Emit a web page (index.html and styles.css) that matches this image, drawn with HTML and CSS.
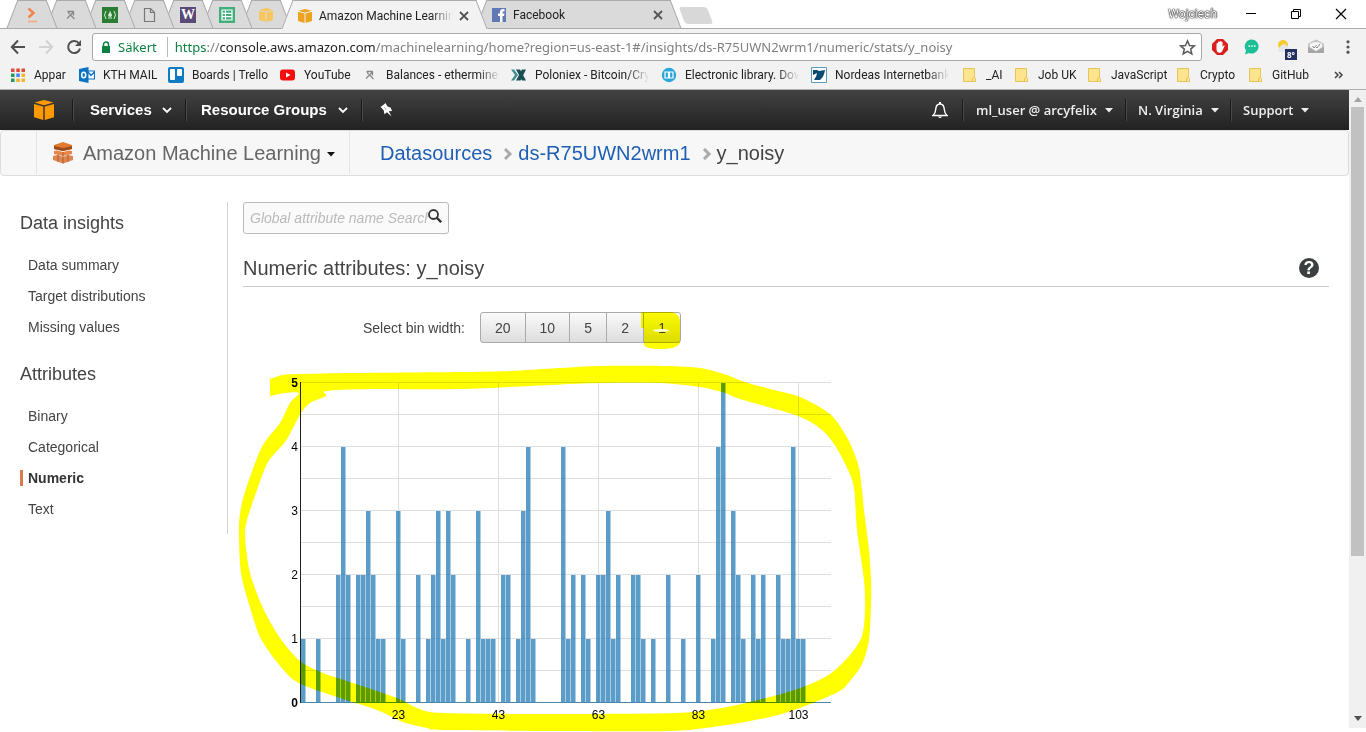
FILE: index.html
```html
<!DOCTYPE html>
<html lang="en">
<head>
<meta charset="utf-8">
<title>Amazon Machine Learning</title>
<link rel="stylesheet" href="styles.css">
</head>
<body>
<svg class="defs" aria-hidden="true">
  <symbol id="cube" viewBox="0 0 20 20">
    <path d="M10 0l9.500 2.500-9.500 2.800L.5 2.500z"/>
    <path d="M0 4l9.300 2.600V20L0 17.200zM20 4l-9.300 2.600V20L20 17.200z"/>
  </symbol>
  <symbol id="folder" viewBox="0 0 16 16">
    <path d="M1.500 1.500h11v9l1 1v3h-12z" fill="#fee48c" stroke="#e6c45c"/>
    <path d="M10.500 14v-2.500l2-1" fill="none" stroke="#e6c45c"/>
  </symbol>
  <symbol id="pick" viewBox="0 0 16 16">
    <path d="M4.500 4.500h6.500M10.500 5L4 11.500M5 4.500l1.500 3M10.500 5v3.500M8 8.500l3.500 3.500" fill="none" stroke="#888" stroke-width="1.300"/>
  </symbol>
  <symbol id="cross" viewBox="0 0 10 10"><path d="M1 1l8 8M9 1L1 9" fill="none" stroke="#555" stroke-width="1.800"/></symbol>
  <symbol id="caret" viewBox="0 0 8 5"><path d="M0 0h8L4 4.500z" fill="currentColor"/></symbol>
  <symbol id="down" viewBox="0 0 10 7"><path d="M1 1l4 4 4-4" fill="none" stroke="currentColor" stroke-width="1.800"/></symbol>
  <symbol id="crumb" viewBox="0 0 10 12"><path d="M2 1l5 5-5 5" fill="none" stroke="#aaa" stroke-width="3"/></symbol>
</svg>

<header class="browser">
  <div class="tabstrip">
    <div class="tab t1"><svg class="ico" viewBox="0 0 16 16"><path d="M4.500 1.500l5 4.500-5 4.500" fill="none" stroke="#f4854a" stroke-width="2.500"/><path d="M4 14.500h9" stroke="#f9a67c" stroke-width="1.500"/></svg></div>
    <div class="tab t2"><svg class="ico"><use href="#pick"/></svg></div>
    <div class="tab t3"><svg class="ico" viewBox="0 0 16 16"><path d="M0 0h16v16H0z" fill="#2b7d33"/><path d="M4 4q-3 4 0 8M12 4q3 4 0 8M6 11h4" fill="none" stroke="#d5ead6"/><path d="M8 3.500q-.2 2-2 4.500 0 2 2 2t2-2q-.3-1-1-2z" fill="#d5ead6"/></svg></div>
    <div class="tab t4"><svg class="ico" viewBox="0 0 16 16"><path d="M3.500 1.500h6l4 4v9h-10zM9.500 1.500v4h4" fill="none" stroke="#777" stroke-width="1.200"/></svg></div>
    <div class="tab t5"><span class="ico w-logo">W</span></div>
    <div class="tab t6"><svg class="ico" viewBox="0 0 16 16"><path d="M0 0h16v16H0z" fill="#3fae7b"/><path d="M3 3h10v10H3zM3 6.300h10M3 9.600h10M6.500 3v10" fill="none" stroke="#fff" stroke-width="1.200"/></svg></div>
    <div class="tab t7"><svg class="ico amber pale"><use href="#cube"/></svg></div>
    <div class="tab active"><svg class="ico amber"><use href="#cube"/></svg><span class="tab-title">Amazon Machine Learning</span><button class="tab-close" aria-label="Close tab"><svg><use href="#cross"/></svg></button></div>
    <div class="tab wide"><svg class="ico" viewBox="0 0 16 16"><path d="M1 1h14v14H1z" fill="#6079b5"/><path d="M9 15V9H7V6.500h2V5q0-3 3-3h1.500v2.500h-1q-1 0-1 1v1h2L13 9h-1.500v6z" fill="#fff"/></svg><span class="tab-title">Facebook</span><button class="tab-close" aria-label="Close tab"><svg><use href="#cross"/></svg></button></div>
    <button class="new-tab" aria-label="New tab"></button>
    <div class="window-controls">
      <span class="profile">Wojciech</span>
      <button aria-label="Minimize"><svg viewBox="0 0 12 12"><path d="M1 5.500h10" stroke="#000"/></svg></button>
      <button aria-label="Restore"><svg viewBox="0 0 12 12"><path d="M1.500 3.500h7v7h-7zM3.500 3V1.500h7v7H9" fill="none" stroke="#000"/></svg></button>
      <button aria-label="Close"><svg viewBox="0 0 12 12"><path d="M1 1l10 10M11 1L1 11" stroke="#000" stroke-width="1.200"/></svg></button>
    </div>
  </div>

  <div class="toolbar">
    <div class="nav-buttons">
      <button aria-label="Back"><svg viewBox="0 0 16 16"><path d="M15 8H2M8 1.500L1.800 8 8 14.500" fill="none" stroke="#505050" stroke-width="2"/></svg></button>
      <button aria-label="Forward"><svg viewBox="0 0 16 16"><path d="M1 8h13M8 1.500L14.200 8 8 14.500" fill="none" stroke="#d2d2d2" stroke-width="2"/></svg></button>
      <button aria-label="Reload"><svg viewBox="0 0 16 16"><path d="M13 4.500A6 6 0 1 0 14 9.500" fill="none" stroke="#505050" stroke-width="2"/><path d="M15 1v6H9z" fill="#505050"/></svg></button>
    </div>
    <div class="omnibox">
      <svg class="lock" viewBox="0 0 10 12"><path d="M1 5h8v7H1z" fill="#0b8043"/><path d="M2.500 5.500V3.500a2.500 2.500 0 0 1 5 0v2" fill="none" stroke="#0b8043" stroke-width="1.500"/></svg>
      <span class="secure">Säkert</span>
      <span class="url"><span class="scheme">https</span>://<span class="host">console.aws.amazon.com</span>/machinelearning/home?region=us-east-1#/insights/ds-R75UWN2wrm1/numeric/stats/y_noisy</span>
      <svg class="star" viewBox="0 0 16 16"><path d="M8 1.800l1.900 4.300 4.600.4-3.500 3 1.100 4.600L8 11.700l-4.100 2.400L5 9.500l-3.500-3 4.600-.4z" fill="none" stroke="#5a5a5a" stroke-width="1.400"/></svg>
    </div>
    <div class="extensions">
      <svg viewBox="0 0 16 16"><path d="M5 0h6l5 5v6l-5 5H5l-5-5V5z" fill="#d8201f"/><path d="M4.500 8.500v-4q.8-1 1.500 0V3q.8-1 1.500 0v-.5q.8-1 1.500 0V3q.8-1 1.500 0v5l1-1.500q1-.5 1.200.3L10 12.500q-1 1.500-3 1.300-2.500-.4-2.500-3z" fill="#fff"/></svg>
      <svg viewBox="0 0 16 16"><path d="M8 .5a7 7 0 1 1-3 13.500L1 15.500l1-4A7 7 0 0 1 8 .5z" fill="#1dbf96"/><path d="M4.500 7h1.500M7.300 7h1.500M10 7h1.500" stroke="#fff" stroke-width="1.300"/></svg>
      <span class="weather"><svg viewBox="0 0 16 16"><circle cx="7" cy="6" r="5" fill="#f9c931"/><path d="M3 13a3 3 0 0 1 1-5 4 4 0 0 1 7-1q3 1 3.500 6z" fill="#e4e7ea"/></svg><span class="degrees">8°</span></span>
      <svg viewBox="0 0 16 16"><path d="M0 5l3-2 5-2.500L13 3l3 2v8H0z" fill="#c4c4c4"/><path d="M2 5q6-4 12 0v3l-6 4-6-4z" fill="#f8f8f8"/><path d="M4.500 7l1.500 2 2.500-3M8 8l1 1 3-4" fill="none" stroke="#888"/><path d="M0 8l8 4.500L16 8v6H0z" fill="#a5a5a5"/></svg>
      <svg viewBox="0 0 16 16"><circle cx="8" cy="2.800" r="1.600" fill="#555"/><circle cx="8" cy="8" r="1.600" fill="#555"/><circle cx="8" cy="13.200" r="1.600" fill="#555"/></svg>
    </div>
  </div>

  <nav class="bookmarks" aria-label="Bookmarks">
    <a href="#"><svg class="ico" viewBox="0 0 16 16"><path d="M1 1.500h3.500V5H1zM6.300 1.500h3.500V5H6.300zM11.500 1.500H15V5h-3.500z" fill="#dd4b39"/><path d="M1 6.500h3.500V10H1z" fill="#209b58"/><path d="M6.300 6.500h3.500V10H6.300z" fill="#4285f4"/><path d="M11.500 6.500H15V10h-3.500zM6.300 11.500h3.500V15H6.300zM11.500 11.500H15V15h-3.500z" fill="#f0b62e"/><path d="M1 11.500h3.500V15H1z" fill="#209b58"/></svg><span>Appar</span></a>
    <a href="#"><svg class="ico" viewBox="0 0 16 16"><path d="M8 4h7.500v8H8zM9 5l3 3.500L15.500 5" fill="#fff" stroke="#0b72c4" stroke-width="1.200"/><path d="M0 2l9.500-2v16L0 14z" fill="#0b72c4"/><ellipse cx="4.700" cy="8" rx="2" ry="2.800" fill="none" stroke="#fff" stroke-width="1.500"/></svg><span>KTH MAIL</span></a>
    <a href="#"><svg class="ico" viewBox="0 0 16 16"><rect width="16" height="16" rx="2" fill="#0f7cc0"/><rect x="2" y="2" width="5" height="11" rx="1" fill="#fff"/><rect x="9" y="2" width="5" height="7" rx="1" fill="#fff"/></svg><span>Boards | Trello</span></a>
    <a href="#"><svg class="ico" viewBox="0 0 16 16"><rect y="2.500" width="15" height="11" rx="3" fill="#f60d0d"/><path d="M6 5.500v5L10.500 8z" fill="#fff"/></svg><span>YouTube</span></a>
    <a href="#"><svg class="ico"><use href="#pick"/></svg><span>Balances - ethermine</span></a>
    <a href="#"><svg class="ico" viewBox="0 0 16 16"><path d="M0 2.500h3l4 5.500-4 5.500H0L4 8z" fill="#3e8e8e"/><path d="M5 2.500h4l6 11h-4zM11 2.500h4L9.500 13.500H5z" fill="#174e52"/></svg><span>Poloniex - Bitcoin/Cry</span></a>
    <a href="#"><svg class="ico" viewBox="0 0 16 16"><circle cx="8" cy="8" r="7.200" fill="#2aa5da"/><path d="M4 5h3.500v6H4zM8.500 5H12v6H8.500z" fill="none" stroke="#fff" stroke-width="1.200"/></svg><span>Electronic library. Dow</span></a>
    <a href="#"><svg class="ico" viewBox="0 0 16 16"><path d="M.5.5h15v15H.5z" fill="#fff" stroke="#5f9cba"/><path d="M2 3h4l2 1 6-1q-1 7-5 10H3q3-4 3-7L2 8z" fill="#0b4a72"/></svg><span>Nordeas Internetbank</span></a>
    <a href="#"><svg class="ico"><use href="#folder"/></svg><span>_AI</span></a>
    <a href="#"><svg class="ico"><use href="#folder"/></svg><span>Job UK</span></a>
    <a href="#"><svg class="ico"><use href="#folder"/></svg><span>JavaScript</span></a>
    <a href="#"><svg class="ico"><use href="#folder"/></svg><span>Crypto</span></a>
    <a href="#"><svg class="ico"><use href="#folder"/></svg><span>GitHub</span></a>
    <button class="more" aria-label="More bookmarks"><svg viewBox="0 0 10 8"><path d="M1 1l3 3-3 3M5 1l3 3-3 3" fill="none" stroke="#444" stroke-width="1.500"/></svg></button>
  </nav>
</header>

<div class="viewport">
  <div class="page">
    <nav class="aws-nav">
      <a class="aws-home" href="#" aria-label="AWS home"><svg><use href="#cube"/></svg></a>
      <button class="menu services">Services <svg class="down"><use href="#down"/></svg></button>
      <button class="menu groups">Resource Groups <svg class="down"><use href="#down"/></svg></button>
      <button class="menu pin" aria-label="Pin"><svg viewBox="0 0 14 14"><path d="M5.800.3l1.400 3 3.600 1.500L12 8l-3.200.3 2.700 5.200L7 9.200l-2.600 2-.6-3.600-2.600-3-.9-.5L2.600 2.500 5 .4z" fill="#fff"/><path d="M4.500 4l1.500 3" stroke="#888" stroke-width=".6"/></svg></button>
      <span class="spacer"></span>
      <button class="bell" aria-label="Notifications"><svg viewBox="0 0 16 18"><path d="M1 14.500q2.500-2.500 2.700-6Q4 3 8 3t4.300 5.500q.2 3.500 2.700 6z" fill="none" stroke="#fff" stroke-width="1.400"/><path d="M7 1h2v2H7zM6 15.500h4q-2 3-4 0z" fill="#fff"/></svg></button>
      <button class="menu small user">ml_user @ arcyfelix <svg class="caret"><use href="#caret"/></svg></button>
      <button class="menu small region">N. Virginia <svg class="caret"><use href="#caret"/></svg></button>
      <button class="menu small support">Support <svg class="caret"><use href="#caret"/></svg></button>
    </nav>

    <div class="service-bar">
      <button class="service">
        <svg class="service-icon" viewBox="0 0 20 22"><path d="M10 0l9 3v4l-9 2-9-2V3z" fill="#e27b32"/><path d="M1 4l9 2 9-2v3l-9 2-9-2z" fill="#9d4c1c"/><path d="M1 9l3-.5 6 1.500 6-1.500 3 .5v3l-9 2-9-2z" fill="#e88748"/><path d="M0 14l5-1 5 2 5-2 5 1v4l-10 3.500L0 18z" fill="#dd8650"/><path d="M10 10v11.500M5 13v7M15 13v7" stroke="#b75e2b"/></svg>
        Amazon Machine Learning <svg class="caret"><use href="#caret"/></svg>
      </button>
      <nav class="crumbs" aria-label="Breadcrumb">
        <a href="#">Datasources</a>
        <svg><use href="#crumb"/></svg>
        <a href="#">ds-R75UWN2wrm1</a>
        <svg><use href="#crumb"/></svg>
        <span>y_noisy</span>
      </nav>
    </div>

    <div class="layout">
      <aside class="sidebar">
        <h2>Data insights</h2>
        <ul>
          <li><a href="#">Data summary</a></li>
          <li><a href="#">Target distributions</a></li>
          <li><a href="#">Missing values</a></li>
        </ul>
        <h2>Attributes</h2>
        <ul>
          <li><a href="#">Binary</a></li>
          <li><a href="#">Categorical</a></li>
          <li><a href="#" class="current" aria-current="page">Numeric</a></li>
          <li><a href="#">Text</a></li>
        </ul>
      </aside>

      <main class="content">
        <div class="search">
          <input type="text" placeholder="Global attribute name Search" aria-label="Global attribute name search">
          <svg viewBox="0 0 14 14"><circle cx="5.500" cy="5.500" r="4.500" fill="none" stroke="#333" stroke-width="1.800"/><path d="M8.500 8.500l4.700 4.700" stroke="#333" stroke-width="2.400"/></svg>
        </div>
        <div class="heading">
          <h1>Numeric attributes: y_noisy</h1>
          <button class="help" aria-label="Help">?</button>
        </div>
        <div class="bins">
          <span id="bin-label">Select bin width:</span>
          <div class="bin-group" role="group" aria-labelledby="bin-label">
            <button>20</button><button>10</button><button>5</button><button>2</button><button>1</button>
          </div>
          <svg class="marker marker-bin" viewBox="0 0 40 40" aria-hidden="true"><path d="M0 2H31Q39 4 39 12V32Q38 39 20 39Q3 39 3 34V18H0z"/></svg>
        </div>
        <figure class="chart">
          <svg class="plot" viewBox="243 360 640 372" role="img" aria-label="Histogram of y_noisy">
            <g id="grid"></g>
            <path id="bars"></path>
            <path class="axis" d="M300.500 382v321"/>
            <path class="base" d="M301 702.500h530"/>
          </svg>
          <svg class="marker marker-chart" viewBox="243 360 640 372" aria-hidden="true"><path id="pen"></path></svg>
        </figure>
      </main>
    </div>
  </div>
  <div class="scrollbar" aria-hidden="true">
    <svg viewBox="0 0 8 5"><path d="M0 5h8L4 0z" fill="#a3a3a3"/></svg>
    <div class="thumb"></div>
    <svg viewBox="0 0 8 5"><path d="M0 0h8L4 5z" fill="#505050"/></svg>
  </div>
</div>
<script src="chart.js"></script>
</body>
</html>
```
FILE: styles.css
```css
* { box-sizing: border-box; }
body {
  margin: 0;
  height: 100vh;
  display: flex;
  flex-direction: column;
  overflow: hidden;
  background: #fff;
  color: #444;
  font: 14px/20px "Liberation Sans", Arial, sans-serif;
}
button {
  margin: 0;
  padding: 0;
  border: 0;
  background: none;
  color: inherit;
  font: inherit;
}
a { color: inherit; text-decoration: none; }
svg { display: block; flex: none; }
.defs { position: absolute; width: 0; height: 0; }
.ico { width: 16px; height: 16px; flex: none; }
.amber { fill: #eca31f; padding: 1px; }
.pale { fill: #f7c65f; }

/* Browser frame */
.browser {
  flex: none;
  background: #f2f2f2;
  border-bottom: 1px solid #b0b0b0;
  color: #222;
  font: 12px/16px Roboto, "Noto Sans", sans-serif;
}
.tabstrip {
  display: flex;
  height: 29px;
  padding-left: 12px;
  background: #fff;
  border-bottom: 1px solid #aaa;
}
.tab {
  position: relative;
  display: flex;
  align-items: center;
  width: 39px;
  padding: 2px 0 0 12px;
  isolation: isolate;
}
.tab::before, .tab::after {
  content: "";
  position: absolute;
  z-index: -1;
  top: 0;
  bottom: 0;
  background: #dadada;
  border: 0 solid #aaa;
  border-top-width: 1px;
}
.tab::before { left: 0; right: 12px; border-left-width: 1px; transform: skewX(-21deg); }
.tab::after { right: -1px; left: 12px; border-right-width: 1px; transform: skewX(21deg); }
.t1 { z-index: 8; } .t2 { z-index: 7; } .t3 { z-index: 6; } .t4 { z-index: 5; }
.t5 { z-index: 4; } .t6 { z-index: 3; } .t7 { z-index: 2; }
.tab.active, .tab.wide { width: 194px; padding: 2px 12px 0 10px; gap: 6px; }
.tab.active { z-index: 9; margin: 0 0 -1px 2px; }
.tab.active::before, .tab.active::after { background: #f2f2f2; }
.tab-title {
  flex: 1;
  overflow: hidden;
  white-space: nowrap;
  -webkit-mask-image: linear-gradient(to right, #000 112px, transparent 134px);
  mask-image: linear-gradient(to right, #000 112px, transparent 134px);
}
.tab-close svg { width: 10px; height: 10px; }
.w-logo {
  background: #5a4a78;
  color: #fff;
  font: bold 14px/16px "Liberation Serif", serif;
  text-align: center;
}
.new-tab {
  width: 28px;
  height: 17px;
  margin: 7px 0 0 7px;
  background: #d8d8d8;
  border-radius: 3px;
  transform: skewX(21deg);
}
.window-controls { display: flex; align-items: center; margin-left: auto; padding-right: 19px; }
.window-controls button { margin-left: 33px; }
.window-controls svg { width: 12px; height: 12px; }
.profile { color: #fff; margin-right: -5px; text-shadow: 0 0 1px #000, 0 0 1px #000, 0 0 2px #444; }

.toolbar { display: flex; align-items: center; height: 36px; gap: 10px; padding: 0 10px; }
.nav-buttons { display: flex; gap: 12px; width: 72px; }
.nav-buttons svg { width: 16px; height: 16px; }
.omnibox {
  flex: 1;
  display: flex;
  align-items: center;
  min-width: 0;
  height: 28px;
  padding: 0 5px 0 8px;
  background: #fff;
  border: 1px solid #a8a8a8;
  border-radius: 3px;
  font: 13px/20px "Noto Sans", "Open Sans", sans-serif;
  white-space: nowrap;
}
.lock { width: 10px; height: 12px; }
.secure {
  margin: 0 7px;
  padding-right: 10px;
  border-right: 1px solid #bbb;
  color: #0b8043;
}
.url { flex: 1; overflow: hidden; color: #808080; }
.scheme { color: #0b8043; }
.host { color: #222; }
.star { width: 17px; height: 17px; }
.extensions { display: flex; gap: 16px; }
.extensions svg { width: 16px; height: 16px; }
.weather { position: relative; }
.degrees {
  position: absolute;
  left: 9px;
  top: 10px;
  width: 12px;
  height: 11px;
  background: #232f5e;
  color: #fff;
  font: bold 8px/11px "Noto Sans", sans-serif;
  text-align: center;
}
.bookmarks {
  display: grid;
  grid-template-columns: 69px 89px 112px 82px 149px 150px 150px 151px 52px 73px 89px 72px 1fr 32px;
  align-items: center;
  height: 24px;
  padding-left: 10px;
  padding-bottom: 4px;
}
.bookmarks a { display: flex; align-items: center; gap: 8px; min-width: 0; padding-right: 13px; }
.bookmarks a:nth-child(-n+4), .bookmarks a:nth-child(n+9) { padding-right: 0; }
.bookmarks span { overflow: hidden; white-space: nowrap; }
.bookmarks a:nth-child(n+5):nth-child(-n+8) span {
  -webkit-mask-image: linear-gradient(to right, #000 92px, transparent 114px);
  mask-image: linear-gradient(to right, #000 92px, transparent 114px);
}
.more svg { width: 10px; height: 8px; }

/* Page area and scrollbar */
.viewport { flex: 1; display: flex; min-height: 0; }
.page { flex: 1; min-width: 0; }
.scrollbar {
  display: flex;
  flex-direction: column;
  align-items: center;
  width: 17px;
  margin-bottom: 4px;
  padding: 7px 0;
  background: #f0f0f0;
}
.scrollbar svg { width: 8px; height: 5px; }
.thumb { width: 13px; height: 449px; margin: 5px 0 auto; background: #c1c1c1; }

/* AWS navigation */
.aws-nav {
  display: flex;
  align-items: center;
  height: 40px;
  background: linear-gradient(#424242, #222);
  color: #fff;
}
.aws-home { width: 72px; padding-left: 34px; }
.aws-home svg { width: 20px; height: 20px; fill: #ff9900; }
.menu {
  display: flex;
  align-items: center;
  justify-content: space-between;
  height: 22px;
  border-left: 1px solid #1a1a1a;
  box-shadow: inset 1px 0 #484848;
  font-size: 15px;
  font-weight: bold;
  white-space: nowrap;
}
.down { width: 10px; height: 7px; }
.services { width: 113px; padding: 0 13px 0 17px; }
.groups { width: 176px; padding: 0 13px 0 15px; }
.pin { padding-left: 18px; }
.pin svg { width: 14px; height: 14px; }
.spacer { flex: 1; }
.bell { width: 30px; }
.bell svg { width: 16px; height: 18px; }
.small { font: 600 13px/20px "Open Sans", "Noto Sans", sans-serif; color: #eee; }
.small .caret { margin-left: 8px; }
.caret { width: 8px; height: 5px; }
.user { width: 163px; padding: 0 13px; }
.region { width: 105px; padding: 0 12px; }
.support { width: 119px; padding: 0 42px 0 12px; }

.service-bar {
  display: flex;
  align-items: center;
  height: 46px;
  padding: 0 0 1px 35px;
  background: #f7f7f7;
  border: 1px solid #ddd;
  border-radius: 4px;
  font-size: 20px;
}
.service {
  display: flex;
  align-items: center;
  align-self: stretch;
  width: 314px;
  padding-left: 16px;
  border: solid #e3e3e3;
  border-width: 0 1px;
  color: #666;
}
.service-icon { width: 20px; height: 22px; margin-right: 10px; }
.service .caret { margin-left: 6px; margin-top: 4px; color: #111; }
.crumbs { display: flex; align-items: center; padding-left: 30px; }
.crumbs svg { width: 10px; height: 12px; margin: 2px 5px 0 11px; }
.crumbs a { color: #1f5fb4; }

/* Body */
.layout { display: flex; align-items: flex-start; padding: 26px 20px 0; }
.sidebar { flex: none; width: 208px; padding: 9px 0 10px; border-right: 1px solid #d5d5d5; }
.sidebar h2 { margin: 0 0 14px; font-size: 18px; line-height: 24px; font-weight: normal; }
.sidebar ul { margin: 0 0 20px; padding: 0; list-style: none; }
.sidebar ul:last-child { margin-bottom: 0; }
.sidebar li { display: flex; align-items: center; height: 31px; }
.sidebar li a { padding-left: 8px; line-height: 16px; }
.sidebar .current { padding-left: 5px; border-left: 3px solid #dd7a4d; font-weight: bold; color: #333; }

.content { flex: 1; min-width: 0; padding-left: 15px; }
.search {
  display: flex;
  align-items: flex-start;
  width: 206px;
  height: 32px;
  padding: 0 6px;
  border: 1px solid #bbb;
  border-radius: 3px;
  background: #fafafa;
}
.search input {
  flex: 1;
  min-width: 0;
  height: 30px;
  padding: 0;
  border: 0;
  outline: 0;
  background: none;
  font: italic 14px/20px "Liberation Sans", Arial, sans-serif;
}
.search input::placeholder { color: #bbb; }
.search svg { width: 14px; height: 14px; margin-top: 6px; }
.heading {
  display: flex;
  align-items: center;
  justify-content: space-between;
  height: 37px;
  margin-top: 16px;
  padding-right: 10px;
  border-bottom: 1px solid #ccc;
}
.heading h1 { margin: 0; font-size: 20px; line-height: 28px; font-weight: normal; }
.help {
  width: 20px;
  height: 20px;
  border-radius: 50%;
  background: #3c3f41;
  color: #fff;
  font: bold 18px/20px "Liberation Sans", Arial, sans-serif;
}
.bins { position: relative; display: flex; align-items: center; gap: 15px; margin-top: 25px; padding-left: 120px; }
.bins::after {
  content: "";
  position: absolute;
  left: 410px;
  top: 17px;
  width: 16px;
  height: 3px;
  border-radius: 50%;
  background: #ffffd8;
}
.bin-group {
  display: flex;
  height: 31px;
  border: 1px solid #aaa;
  border-radius: 3px;
  background: linear-gradient(#fafafa, #ddd);
}
.bin-group button { min-width: 37px; padding: 0 14px; }
.bin-group button + button { border-left: 1px solid #aaa; }

.chart { position: relative; margin: 17px 0 0; }
.plot { width: 640px; height: 372px; font: 12px "Liberation Sans", Arial, sans-serif; }
#bars { fill: #1f77b4; fill-opacity: .73; }
#grid path { stroke: #dedede; fill: none; }
#grid text { fill: #000; }
#grid .end { font-weight: bold; }
.axis { stroke: #222; }
.base { stroke: #4d86ab; }
.marker { position: absolute; fill: #ff0; mix-blend-mode: multiply; pointer-events: none; overflow: visible; }
.marker-bin { left: 398px; top: -2px; width: 40px; height: 40px; }
.marker-chart { left: 0; top: 0; width: 640px; height: 372px; }
```
FILE: chart.js
```js
// Bin index -> count
const counts = {
  0: 1, 3: 1, 7: 2, 8: 4, 9: 2, 11: 2, 12: 2, 13: 3, 14: 2, 15: 1, 16: 1, 19: 3, 20: 1,
  23: 2, 25: 1, 26: 2, 27: 3, 28: 1, 29: 3, 30: 2, 33: 1, 35: 3, 36: 1, 37: 1, 38: 1,
  40: 2, 41: 2, 43: 1, 44: 3, 45: 4, 46: 1, 52: 4, 53: 1, 54: 2, 56: 2, 57: 1, 59: 2,
  60: 2, 61: 3, 62: 1, 63: 2, 66: 2, 67: 2, 68: 1, 70: 1, 73: 2, 76: 1, 79: 2, 82: 1,
  83: 4, 84: 5, 86: 3, 87: 2, 88: 1, 90: 2, 91: 1, 92: 2, 95: 2, 96: 1, 97: 1, 98: 4,
  99: 1, 100: 1
};
const left = 301, base = 703, unit = 64, step = 5;
document.getElementById('bars').setAttribute('d', Object.entries(counts)
  .map(([i, n]) => `M${left + i * step} ${base}v${-n * unit}h4.500v${n * unit}z`).join(''));

let grid = '';
for (let v = 0.5; v <= 5; v += 0.5) grid += `<path d="M301 ${base - 0.5 - v * unit}h530"/>`;
for (let v = 0; v <= 5; v++) {
  grid += `<text class="${v % 5 ? '' : 'end'}" x="298" y="${base + 4 - v * unit}" text-anchor="end">${v}</text>`;
}
for (let v = 23; v <= 103; v += 20) {
  const x = 383.5 + (v - 20) * step;
  grid += `<path d="M${x} 382v320"/><text x="${x}" y="719" text-anchor="middle">${v}</text>`;
}
document.getElementById('grid').innerHTML = grid;

// Closed smooth outline through the points of a pen stroke
function smooth(points) {
  const n = points.length;
  let d = `M${points[0]}`;
  for (let i = 0; i < n; i++) {
    const [a, b, c, e] = [-1, 0, 1, 2].map(k => points[(i + k + n) % n]);
    d += `C${b[0] + (c[0] - a[0]) / 7} ${b[1] + (c[1] - a[1]) / 7} ${c[0] - (e[0] - b[0]) / 7} ${c[1] - (e[1] - b[1]) / 7} ${c}`;
  }
  return d + 'z';
}
const outer = [[270, 379], [270, 379], [283, 375], [300, 374], [355, 373], [465, 372], [510, 371], [560, 368],
  [602, 366], [665, 366], [700, 368], [724, 374], [745, 382], [770, 389], [800, 397], [830, 414],
  [845, 434], [853, 450], [859, 468], [862, 490], [864, 510], [869, 550], [871, 580], [871, 605], [869, 640],
  [862, 664], [850, 681], [838, 692], [800, 708], [770, 717], [720, 726], [670, 731], [570, 731],
  [443, 730], [427, 728], [403, 722], [377, 710], [337, 697], [297, 682], [277, 662], [260, 637],
  [250, 607], [241, 573], [239, 527], [242, 503], [250, 477], [263, 445], [280, 423], [290, 403], [299, 393],
  [285, 393], [270, 396], [270, 396]];
const inner = [[326, 391], [370, 389], [460, 389], [550, 385], [600, 383], [660, 383], [700, 387],
  [725, 393], [740, 399], [798, 416], [822, 430], [836, 447], [848, 470], [854, 488], [857, 530],
  [864, 580], [865, 610], [862, 636], [850, 655], [830, 674], [803, 687], [770, 697], [722, 708],
  [675, 713], [560, 714], [443, 713], [417, 708], [397, 698], [353, 683], [323, 673], [300, 661],
  [280, 638], [263, 608], [250, 573], [245, 537], [247, 520], [257, 490], [268, 462], [285, 442],
  [293, 428], [301, 413], [310, 403], [326, 396]];
const pen = document.getElementById('pen');
pen.setAttribute('fill-rule', 'evenodd');
pen.setAttribute('d', smooth(outer) + smooth(inner));
```
